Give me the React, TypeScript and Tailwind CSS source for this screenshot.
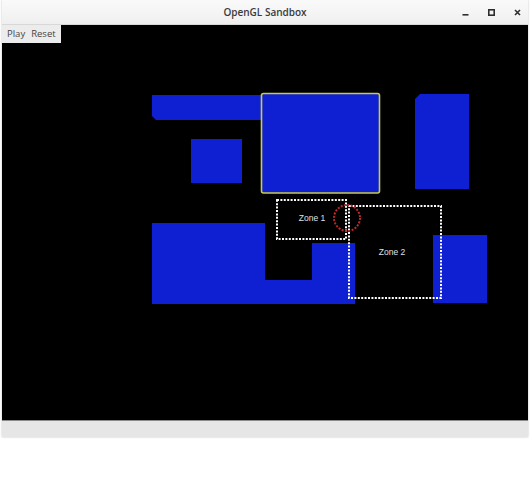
export default function App() {
  const blue = "#0f20d2";
  return (
    <div className="w-[532px] h-[494px] bg-white" style={{ fontFamily: '"Open Sans", "Noto Sans", sans-serif' }}>
      <div className="ml-[2px] w-[526px] flex flex-col shadow-[0_0_2px_rgba(0,0,0,0.25)]">
        {/* title bar */}
        <div className="relative h-[25px] flex items-center justify-center bg-gradient-to-b from-[#fafafa] to-[#efefef] border-b border-[#d8d8d8]">
          <span className="text-[10px] font-semibold text-[#3a3a3a]">OpenGL Sandbox</span>
          <div className="absolute right-[7px] top-0 h-full flex items-center gap-[19px] text-[#2e2e2e]">
            <svg width="7" height="7" viewBox="0 0 7 7">
              <rect x="0.5" y="5" width="6" height="1.6" fill="currentColor" />
            </svg>
            <svg width="7" height="7" viewBox="0 0 7 7">
              <rect x="0.8" y="0.8" width="5.4" height="5.4" fill="none" stroke="currentColor" strokeWidth="1.6" />
            </svg>
            <svg width="7" height="7" viewBox="0 0 7 7">
              <path d="M1 1 L6 6 M6 1 L1 6" stroke="currentColor" strokeWidth="1.6" />
            </svg>
          </div>
        </div>

        {/* gl canvas */}
        <div className="relative h-[395px] bg-black overflow-hidden">
          <div className="absolute left-0 top-0 h-[18px] w-[59px] bg-[#ececec] flex items-center gap-[6px] pl-[5px] text-[9.5px] text-[#444]">
            <span>Play</span>
            <span>Reset</span>
          </div>
          <svg width="526" height="395" viewBox="0 0 526 395" className="block">
            <polygon points="150,70 259,70 259,95 154,95 150,91" fill={blue} />
            <rect x="189" y="114" width="51" height="44" fill={blue} />
            <rect x="259.5" y="68.5" width="118" height="99.5" rx="2" fill={blue} stroke="#cccc44" strokeWidth="1.6" />
            <polygon points="418,69 467,69 467,164 413,164 413,74" fill={blue} />
            <polygon points="150,198 263,198 263,255 310,255 310,218 353,218 353,279 150,279" fill={blue} />
            <rect x="431" y="210" width="54" height="68" fill={blue} />

            <rect x="275" y="175" width="69" height="39" fill="none" stroke="#ffffff" strokeWidth="2" strokeDasharray="2 1.4" />
            <rect x="347" y="181" width="92" height="92" fill="none" stroke="#ffffff" strokeWidth="2" strokeDasharray="2 1.4" />
            <circle cx="345" cy="193" r="13" fill="none" stroke="#c02a2a" strokeWidth="2" strokeDasharray="2 1.4" />

            <text x="310" y="196" textAnchor="middle" fontSize="8.5" fill="#e0e0e0" fontFamily='"Liberation Sans", Arial, sans-serif'>Zone 1</text>
            <text x="390" y="230" textAnchor="middle" fontSize="8.5" fill="#e0e0e0" fontFamily='"Liberation Sans", Arial, sans-serif'>Zone 2</text>
          </svg>
        </div>

        {/* status bar */}
        <div className="h-[17px] bg-[#e6e6e6] border-t border-[#8a8a8a]" />
      </div>
    </div>
  );
}
